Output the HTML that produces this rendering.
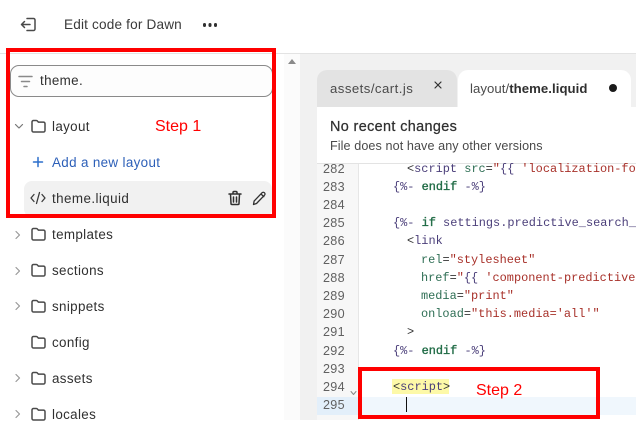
<!DOCTYPE html>
<html><head><meta charset="utf-8">
<style>
html,body{margin:0;padding:0}
body{width:636px;height:420px;overflow:hidden;position:relative;background:#fff;font-family:"Liberation Sans",sans-serif;color:#303030}
.a{position:absolute;white-space:pre}
.t{font-size:13.4px;line-height:18px;height:18px;color:#303030;letter-spacing:.35px}
.ln{position:absolute;left:318px;width:27px;text-align:right;font:12.6px/18px "Liberation Sans",sans-serif;letter-spacing:.35px;color:#616161}
.c{position:absolute;font:11.92px/18px "Liberation Mono",monospace;color:#333;white-space:pre}
.p{color:#4b3f7a}.s{color:#a8312a}.k{color:#1f6b45;-webkit-text-stroke:.35px #1f6b45}.g{color:#2f6f55}
svg{position:absolute;fill:none;stroke:#4a4a4a;stroke-width:1.5;stroke-linecap:round;stroke-linejoin:round}
.r{position:absolute;border:4px solid #f00;box-sizing:border-box}
.st{position:absolute;color:#f00;font-size:16px;line-height:20px}
</style></head><body>
<div class="a" style="left:0;top:53px;width:636px;height:1px;background:#e3e3e3"></div>
<div class="a" style="left:300px;top:54px;width:336px;height:366px;background:#f1f1f1"></div>
<div class="a" style="left:284px;top:54px;width:16px;height:366px;background:#fbfbfb"></div>
<div class="a" style="left:288px;top:59px;width:0;height:0;border-left:4px solid transparent;border-right:4px solid transparent;border-bottom:5px solid #8a8a8a"></div>

<!-- header -->
<svg style="left:20px;top:16px" width="17" height="17" viewBox="0 0 17 17"><path d="M7 2.500h6.500a1.500 1.500 0 0 1 1.500 1.500v9a1.500 1.500 0 0 1-1.500 1.500H7M10 8.500H1.500M4.500 5.500l-3 3 3 3"/></svg>
<div class="a" style="left:64px;top:16px;font-size:13.6px;line-height:18px;color:#3a3a3a;letter-spacing:.17px">Edit code for Dawn</div>
<div class="a" style="left:202.500px;top:23px;width:3.500px;height:3.500px;border-radius:50%;background:#303030;box-shadow:5.500px 0 #303030,11px 0 #303030"></div>

<!-- search -->
<div class="a" style="left:10px;top:65px;width:263px;height:32px;box-sizing:border-box;border:1px solid #8a8a8a;border-radius:9px;background:#fdfdfd"></div>
<svg style="left:18px;top:75px;stroke:#8a8a8a" width="16" height="14" viewBox="0 0 16 14"><path d="M1 1.500h13M3.500 6.500h8M6 11.500h3"/></svg>
<div class="a t" style="left:40px;top:72px">theme.</div>

<!-- tree -->
<svg style="left:14px;top:123px;stroke:#777;stroke-width:1.200" width="10" height="8" viewBox="0 0 10 8"><path d="M1.500 1.500l3.500 3.500 3.500-3.500"/></svg>
<svg style="left:31px;top:119px" width="15" height="14" viewBox="0 0 15 14"><path id="f" d="M1 3a1.500 1.500 0 0 1 1.500-1.500h2.700c.6 0 1 .2 1.400.7l.8.9h5.100A1.500 1.500 0 0 1 14 4.600v6.900a1.500 1.500 0 0 1-1.500 1.500h-10A1.500 1.500 0 0 1 1 11.500z"/></svg>
<div class="a t" style="left:52px;top:118px">layout</div>

<svg style="left:32px;top:156px;stroke:#2c6ecb;stroke-width:1.500" width="12" height="12" viewBox="0 0 12 12"><path d="M6 1.500v9M1.500 6h9"/></svg>
<div class="a t" style="left:52px;top:154px;color:#2c5fb8">Add a new layout</div>

<div class="a" style="left:24px;top:181px;width:248px;height:36px;background:#f1f1f1;border-radius:8px"></div>
<svg style="left:30px;top:191px;stroke:#3a3a3a;stroke-width:1.300" width="16" height="14" viewBox="0 0 16 14"><path d="M4 3.500L1 7l3 3.500M12 3.500L15 7l-3 3.500M9.500 1.500l-3 11"/></svg>
<div class="a t" style="left:52px;top:190px;letter-spacing:.42px">theme.liquid</div>
<svg style="left:228px;top:190px;stroke:#303030" width="14" height="16" viewBox="0 0 14 16"><path d="M1 4h12M5 4V2.500A1 1 0 0 1 6 1.500h2a1 1 0 0 1 1 1V4M2.500 4l.5 9.500a1 1 0 0 0 1 1h6a1 1 0 0 0 1-1l.5-9.500M5.500 7v5M8.500 7v5"/></svg>
<svg style="left:252px;top:190px;stroke:#303030;stroke-width:1.300" width="15" height="16" viewBox="0 0 15 16"><path d="M1.500 14.500l.6-3.400 7.900-8.300a1.700 1.700 0 0 1 2.500 0 1.700 1.700 0 0 1 0 2.400l-8 8.300zM9 4l2.800 2.700"/></svg>

<svg style="left:14px;top:230px;stroke:#999;stroke-width:1.200" width="8" height="10" viewBox="0 0 8 10"><path d="M2 1.500l3.500 3.500-3.500 3.500"/></svg>
<svg style="left:31px;top:227px" width="15" height="14" viewBox="0 0 15 14"><use href="#f"/></svg>
<div class="a t" style="left:52px;top:226px">templates</div>

<svg style="left:14px;top:266px;stroke:#999;stroke-width:1.200" width="8" height="10" viewBox="0 0 8 10"><path d="M2 1.500l3.500 3.500-3.500 3.500"/></svg>
<svg style="left:31px;top:263px" width="15" height="14" viewBox="0 0 15 14"><use href="#f"/></svg>
<div class="a t" style="left:52px;top:262px">sections</div>

<svg style="left:14px;top:301px;stroke:#999;stroke-width:1.200" width="8" height="10" viewBox="0 0 8 10"><path d="M2 1.500l3.500 3.500-3.500 3.500"/></svg>
<svg style="left:31px;top:299px" width="15" height="14" viewBox="0 0 15 14"><use href="#f"/></svg>
<div class="a t" style="left:52px;top:298px">snippets</div>

<svg style="left:31px;top:335px" width="15" height="14" viewBox="0 0 15 14"><use href="#f"/></svg>
<div class="a t" style="left:52px;top:334px">config</div>

<svg style="left:14px;top:373px;stroke:#999;stroke-width:1.200" width="8" height="10" viewBox="0 0 8 10"><path d="M2 1.500l3.500 3.500-3.500 3.500"/></svg>
<svg style="left:31px;top:371px" width="15" height="14" viewBox="0 0 15 14"><use href="#f"/></svg>
<div class="a t" style="left:52px;top:370px">assets</div>

<svg style="left:14px;top:409px;stroke:#999;stroke-width:1.200" width="8" height="10" viewBox="0 0 8 10"><path d="M2 1.500l3.500 3.500-3.500 3.500"/></svg>
<svg style="left:31px;top:407px" width="15" height="14" viewBox="0 0 15 14"><use href="#f"/></svg>
<div class="a t" style="left:52px;top:406px">locales</div>

<!-- tabs -->
<div class="a" style="left:317px;top:70px;width:140px;height:37px;background:#e3e3e3;border-radius:10px 10px 0 0"></div>
<div class="a" style="left:330px;top:80px;font-size:13.2px;line-height:18px;color:#4a4a4a;letter-spacing:.45px">assets/cart.js</div>
<svg style="left:434px;top:81px;stroke:#303030;stroke-width:1.200" width="8" height="8" viewBox="0 0 8 8"><path d="M1 1l6 6M7 1L1 7"/></svg>
<div class="a" style="left:458px;top:70px;width:173px;height:37px;background:#fff;border-radius:10px 10px 0 0"></div>
<div class="a" style="left:470px;top:80px;font-size:13.2px;line-height:18px;color:#4a4a4a;letter-spacing:.05px">layout/<b style="color:#303030">theme.liquid</b></div>
<div class="a" style="left:609px;top:84px;width:8px;height:8px;border-radius:50%;background:#1a1a1a"></div>

<!-- banner -->
<div class="a" style="left:317px;top:107px;width:319px;height:56px;background:#fff"></div>
<div class="a" style="left:330px;top:117px;font-size:14.4px;line-height:20px;color:#303030;-webkit-text-stroke:.25px #303030;letter-spacing:.38px">No recent changes</div>
<div class="a" style="left:330px;top:138px;font-size:12.6px;line-height:17px;color:#4a4a4a;letter-spacing:.09px">File does not have any other versions</div>
<div class="a" style="left:317px;top:163px;width:319px;height:1px;background:#e3e3e3"></div>

<!-- editor -->
<div class="a" style="left:317px;top:164px;width:41px;height:256px;background:#f7f7f7"></div>
<div class="a" style="left:358px;top:164px;width:278px;height:256px;background:#fff;border-left:1px solid #e6e6e6;box-sizing:border-box"></div>
<div class="a" style="left:317px;top:397px;width:41px;height:18px;background:#e3effa"></div>
<div class="a" style="left:358px;top:397px;width:278px;height:18px;background:#f0f7fd"></div>

<div class="ln" style="top:160px">282</div>
<div class="ln" style="top:178px">283</div>
<div class="ln" style="top:196px">284</div>
<div class="ln" style="top:214px">285</div>
<div class="ln" style="top:232px">286</div>
<div class="ln" style="top:251px">287</div>
<div class="ln" style="top:269px">288</div>
<div class="ln" style="top:287px">289</div>
<div class="ln" style="top:305px">290</div>
<div class="ln" style="top:323px">291</div>
<div class="ln" style="top:342px">292</div>
<div class="ln" style="top:360px">293</div>
<div class="ln" style="top:378px">294</div>
<div class="ln" style="top:396px">295</div>
<svg style="left:350px;top:390px;stroke:#888;stroke-width:1" width="7" height="6" viewBox="0 0 7 6"><path d="M1 1.500l2.500 3 2.500-3"/></svg>

<div class="c" style="left:407px;top:160px">&lt;<span class="p">script</span> <span class="g">src</span>=<span class="s">"</span><span class="p">{{</span> <span class="s">'localization-fo</span></div>
<div class="c" style="left:393px;top:178px"><span class="p">{%-</span> <span class="k">endif</span> <span class="p">-%}</span></div>
<div class="c" style="left:393px;top:214px"><span class="p">{%-</span> <span class="k">if</span> <span class="p">settings.predictive_search_</span></div>
<div class="c" style="left:407px;top:232px">&lt;<span class="p">link</span></div>
<div class="c" style="left:421px;top:251px"><span class="g">rel</span>=<span class="s">"stylesheet"</span></div>
<div class="c" style="left:421px;top:269px"><span class="g">href</span>=<span class="s">"</span><span class="p">{{</span> <span class="s">'component-predictive</span></div>
<div class="c" style="left:421px;top:287px"><span class="g">media</span>=<span class="s">"print"</span></div>
<div class="c" style="left:421px;top:305px"><span class="g">onload</span>=<span class="s">"this.media='all'"</span></div>
<div class="c" style="left:407px;top:323px">&gt;</div>
<div class="c" style="left:393px;top:342px"><span class="p">{%-</span> <span class="k">endif</span> <span class="p">-%}</span></div>
<div class="a" style="left:392px;top:379px;width:57px;height:15px;background:#fdf9a8"></div>
<div class="c" style="left:393px;top:378px">&lt;<span class="p">script</span>&gt;</div>
<div class="a" style="left:406px;top:397px;width:1px;height:15px;background:#111"></div>

<!-- annotations -->
<div class="r" style="left:6px;top:48px;width:270px;height:170px"></div>
<div class="r" style="left:358px;top:367px;width:242px;height:52px"></div>
<div class="st" style="left:155px;top:117px">Step 1</div>
<div class="st" style="left:476px;top:381px">Step 2</div>
</body></html>
